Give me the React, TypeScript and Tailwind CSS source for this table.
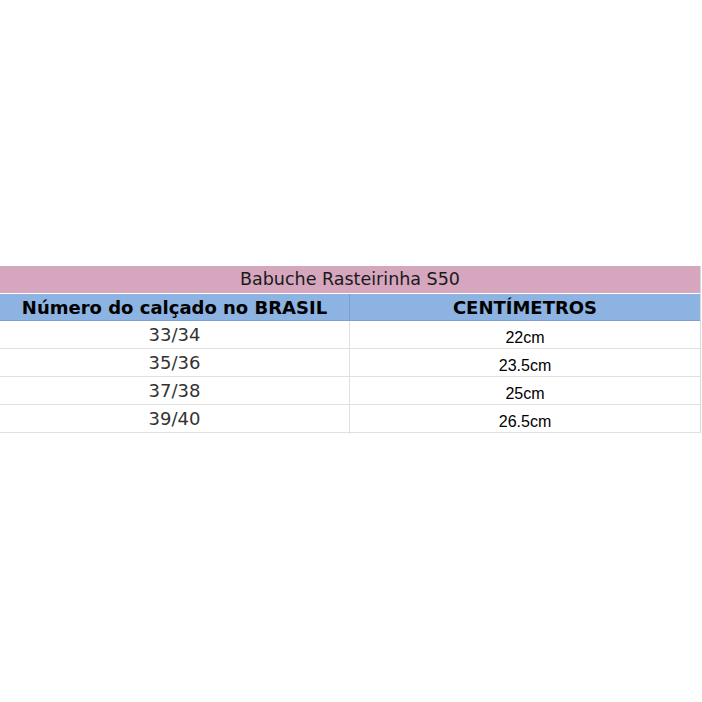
import React from 'react';

const rows = [
  { size: '33/34', cm: '22cm' },
  { size: '35/36', cm: '23.5cm' },
  { size: '37/38', cm: '25cm' },
  { size: '39/40', cm: '26.5cm' },
];

const tahoma = "font-['DejaVu_Sans',sans-serif]";

export default function App() {
  return (
    <div className="h-[702px] w-[702px] bg-white pt-[266px]">
      <div className="w-[701px] border-r border-[#d9d9d9]">
        {/* Title */}
        <div
          className={`flex h-[27px] items-center justify-center bg-[#d5a6bd] text-[17.5px] text-[#1a1a1a] ${tahoma}`}
        >
          Babuche Rasteirinha S50
        </div>

        {/* Header */}
        <div className="grid h-[28px] grid-cols-[350px_1fr] border-t border-b border-t-white border-b-[#7a9fd0] bg-[#8db3e2]">
          <div
            className={`flex items-center justify-center border-r border-[#7a9fd0] text-[18px] font-bold text-black ${tahoma}`}
          >
            Número do calçado no BRASIL
          </div>
          <div className={`flex items-center justify-center text-[18px] font-bold text-black ${tahoma}`}>
            CENTÍMETROS
          </div>
        </div>

        {/* Body */}
        {rows.map((r) => (
          <div key={r.size} className="grid h-[28px] grid-cols-[350px_1fr] border-b border-[#e0e0e0]">
            <div
              className={`flex items-center justify-center border-r border-[#e0e0e0] pb-[2px] text-[18px] text-[#333] ${tahoma}`}
            >
              {r.size}
            </div>
            <div className="flex items-center justify-center pt-[4px] font-['Liberation_Sans',Arial,sans-serif] text-[16px] text-black">
              {r.cm}
            </div>
          </div>
        ))}
      </div>
    </div>
  );
}
